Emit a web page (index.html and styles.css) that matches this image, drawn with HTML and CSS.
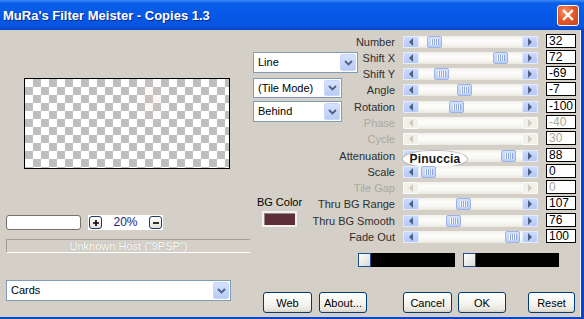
FILE: index.html
```html
<!DOCTYPE html>
<html>
<head>
<meta charset="utf-8">
<link rel="stylesheet" href="styles.css">
</head>
<body>
<div class="window">
  <div class="titlebar">
    <span class="title">MuRa's Filter Meister - Copies 1.3</span>
    <span class="close"><svg width="12" height="12" viewBox="0 0 12 12"><path d="M2 2 L10 10 M10 2 L2 10" stroke="#fff" stroke-width="2.4" stroke-linecap="square"/></svg></span>
  </div>
  <div class="client">
    <div class="left">
      <div class="preview"></div>
      <div class="zoomrow">
        <div class="zoombox"></div>
        <div class="zoomctl">
          <span class="zbtn"><svg width="8" height="8" viewBox="0 0 8 8"><path d="M4 1 V7 M1 4 H7" stroke="#000" stroke-width="1.6"/></svg></span>
          <span class="zpct">20%</span>
          <span class="zbtn"><svg width="8" height="8" viewBox="0 0 8 8"><path d="M1 4 H7" stroke="#000" stroke-width="1.6"/></svg></span>
        </div>
      </div>
      <div class="status">Unknown Host ("9PSP")</div>
      <div class="combo cards"><span class="combo-text">Cards</span><span class="combo-btn"><svg width="9" height="6" viewBox="0 0 9 6"><path d="M1 1 L4.5 4.5 L8 1" fill="none" stroke="#4d6185" stroke-width="1.8"/></svg></span></div>
    </div>
    <div class="main">
      <div class="toprow">
        <div class="mid">
          <div class="combo c-line"><span class="combo-text">Line</span><span class="combo-btn"><svg width="9" height="6" viewBox="0 0 9 6"><path d="M1 1 L4.5 4.5 L8 1" fill="none" stroke="#4d6185" stroke-width="1.8"/></svg></span></div>
          <div class="combo c-tile"><span class="combo-text">(Tile Mode)</span><span class="combo-btn"><svg width="9" height="6" viewBox="0 0 9 6"><path d="M1 1 L4.5 4.5 L8 1" fill="none" stroke="#4d6185" stroke-width="1.8"/></svg></span></div>
          <div class="combo c-behind"><span class="combo-text">Behind</span><span class="combo-btn"><svg width="9" height="6" viewBox="0 0 9 6"><path d="M1 1 L4.5 4.5 L8 1" fill="none" stroke="#4d6185" stroke-width="1.8"/></svg></span></div>
          <div class="bgcolor">
            <span class="bglabel">BG Color</span>
            <span class="swatch"></span>
          </div>
        </div>
        <div class="right">
          <div class="controls">
            <div class="row"><span class="lbl">Number</span>
            <span class="sb"><span class="arrow l"></span><span class="track"><span class="thumb" style="margin-left:8px"></span></span><span class="arrow r"></span></span>
            <span class="val">32</span></div>

            <div class="row"><span class="lbl">Shift X</span>
            <span class="sb"><span class="arrow l"></span><span class="track"><span class="thumb" style="margin-left:74px"></span></span><span class="arrow r"></span></span>
            <span class="val">72</span></div>

            <div class="row"><span class="lbl">Shift Y</span>
            <span class="sb"><span class="arrow l"></span><span class="track"><span class="thumb" style="margin-left:15px"></span></span><span class="arrow r"></span></span>
            <span class="val">-69</span></div>

            <div class="row tall"><span class="lbl">Angle</span>
            <span class="sb"><span class="arrow l"></span><span class="track"><span class="thumb" style="margin-left:38px"></span></span><span class="arrow r"></span></span>
            <span class="val">-7</span></div>

            <div class="row"><span class="lbl">Rotation</span>
            <span class="sb"><span class="arrow l"></span><span class="track"><span class="thumb" style="margin-left:30px"></span></span><span class="arrow r"></span></span>
            <span class="val">-100</span></div>

            <div class="row dis"><span class="lbl">Phase</span>
            <span class="sb"><span class="arrow l"></span><span class="track"></span><span class="arrow r"></span></span>
            <span class="val">-40</span></div>

            <div class="row tall dis"><span class="lbl">Cycle</span>
            <span class="sb"><span class="arrow l"></span><span class="track"></span><span class="arrow r"></span></span>
            <span class="val">30</span></div>

            <div class="row"><span class="lbl">Attenuation</span>
            <span class="sb"><span class="arrow l"></span><span class="track"><span class="thumb" style="margin-left:82px"></span></span><span class="arrow r"></span><span class="badge">Pinuccia</span></span>
            <span class="val">88</span></div>

            <div class="row"><span class="lbl">Scale</span>
            <span class="sb"><span class="arrow l"></span><span class="track"><span class="thumb" style="margin-left:2px"></span></span><span class="arrow r"></span></span>
            <span class="val">0</span></div>

            <div class="row dis"><span class="lbl">Tile Gap</span>
            <span class="sb"><span class="arrow l"></span><span class="track"></span><span class="arrow r"></span></span>
            <span class="val">0</span></div>

            <div class="row tall"><span class="lbl">Thru BG Range</span>
            <span class="sb"><span class="arrow l"></span><span class="track"><span class="thumb" style="margin-left:37px"></span></span><span class="arrow r"></span></span>
            <span class="val">107</span></div>

            <div class="row"><span class="lbl">Thru BG Smooth</span>
            <span class="sb"><span class="arrow l"></span><span class="track"><span class="thumb" style="margin-left:27px"></span></span><span class="arrow r"></span></span>
            <span class="val">76</span></div>

            <div class="row"><span class="lbl">Fade Out</span>
            <span class="sb"><span class="arrow l"></span><span class="track"><span class="thumb" style="margin-left:86px"></span></span><span class="arrow r"></span></span>
            <span class="val">100</span></div>
          </div>
          <div class="bars">
            <div class="cbar b1"><span class="knob"></span></div>
            <div class="cbar b2"><span class="knob"></span></div>
          </div>
        </div>
      </div>
      <div class="buttons">
        <span class="btn b-web">Web</span>
        <span class="btn b-about">About...</span>
        <span class="btn b-cancel">Cancel</span>
        <span class="btn b-ok">OK</span>
        <span class="btn b-reset">Reset</span>
      </div>
    </div>
  </div>
</div>
</body>
</html>
```
FILE: styles.css
```css
body {
  margin: 0;
  width: 584px;
  height: 319px;
  overflow: hidden;
  background: #0b45cf;
  font-family: "Liberation Sans", Arial, sans-serif;
  font-size: 11px;
  font-weight: normal;
  color: #000;
}
.window {
  display: flex;
  flex-direction: column;
  height: 319px;
}
.titlebar {
  height: 30px;
  flex: none;
  display: flex;
  align-items: center;
  justify-content: space-between;
  padding: 0 5px 0 3px;
  background: linear-gradient(#3d8cf8 0, #0a5fe9 3px, #0558e7 50%, #0755e0 88%, #0446c6 100%);
}
.title {
  color: #fff;
  font-weight: bold;
  font-size: 13px;
  text-shadow: 1px 1px 0 #0b2a8c;
}
.close {
  width: 22px;
  height: 21px;
  box-sizing: border-box;
  border: 1px solid #fff;
  border-radius: 3px;
  background: radial-gradient(circle at 35% 30%, #f3936c 0, #e25a2c 45%, #c9411a 100%);
  display: flex;
  align-items: center;
  justify-content: center;
}
.client {
  height: 287px;
  width: 580px;
  flex: none;
  background: #d4d0c8;
  display: flex;
  box-shadow: 1px 0 0 #f4f4f4;
}
.left {
  width: 250px;
  flex: none;
  box-sizing: border-box;
  padding-left: 6px;
  display: flex;
  flex-direction: column;
}
.preview {
  margin: 48px 0 0 18px;
  width: 206px;
  height: 91px;
  box-sizing: border-box;
  border: 1px solid #000;
  background:
    radial-gradient(ellipse 18px 26px at 128px 22px, rgba(236, 205, 205, 0.25), rgba(236, 205, 205, 0) 100%),
    conic-gradient(#bfbfbf 0 25%, #fff 0 50%, #bfbfbf 0 75%, #fff 0) 0 0 / 16px 16px;
}
.zoomrow {
  margin-top: 46px;
  height: 15px;
  display: flex;
  gap: 7px;
}
.zoombox {
  width: 75px;
  box-sizing: border-box;
  border: 1px solid #75726c;
  border-radius: 3px;
  background: #fff;
}
.zoomctl {
  width: 75px;
  box-sizing: border-box;
  padding: 0 1px;
  background: #fff;
  display: flex;
  align-items: center;
  justify-content: space-between;
}
.zbtn {
  width: 13px;
  height: 13px;
  box-sizing: border-box;
  border: 1px solid #1d3a63;
  border-radius: 3px;
  background: linear-gradient(#ffffff, #e4e2da);
  display: flex;
  align-items: center;
  justify-content: center;
}
.zpct {
  color: #1b1b78;
  font-size: 12px;
  line-height: 15px;
}
.status {
  margin-top: 9px;
  height: 14px;
  box-sizing: border-box;
  border-top: 1px solid #a29e96;
  border-left: 1px solid #a29e96;
  border-bottom: 1px solid #fff;
  color: #ffffff;
  text-align: center;
  line-height: 12px;
  font-size: 11px;
  text-shadow: 0 0 1px #a19d94;
}
.combo {
  display: flex;
  box-sizing: border-box;
  border: 1px solid #7f9db9;
  background: #fff;
  height: 21px;
}
.combo-text {
  flex: 1;
  padding-left: 4px;
  line-height: 19px;
  font-size: 11px;
}
.combo-btn {
  width: 16px;
  margin: 1px;
  box-sizing: border-box;
  border: 1px solid #c7d7fb;
  border-radius: 2px;
  background: linear-gradient(#d6e2fd, #b8cbf7);
  display: flex;
  align-items: center;
  justify-content: center;
}
.cards {
  margin-top: 27px;
  width: 225px;
}
.main {
  flex: 1;
  display: flex;
  flex-direction: column;
}
.toprow {
  height: 237px;
  display: flex;
}
.mid {
  width: 105px;
  margin-left: 3px;
  flex: none;
  display: flex;
  flex-direction: column;
}
.c-line {
  margin-top: 22px;
  width: 105px;
}
.c-tile {
  margin-top: 5px;
  width: 89px;
  height: 20px;
}
.c-tile .combo-text {
  line-height: 18px;
}
.c-behind {
  margin-top: 3px;
  width: 89px;
}
.bgcolor {
  margin: 74px 0 0 6px;
  width: 41px;
  display: flex;
  flex-direction: column;
  align-items: center;
}
.bglabel {
  white-space: nowrap;
  line-height: 13px;
}
.swatch {
  margin-top: 2px;
  width: 35px;
  height: 16px;
  box-sizing: border-box;
  border: 2px solid #f3f1ec;
  box-shadow: inset 1px 1px 0 #8e8a83;
  background: #5e2f38;
}
.right {
  flex: 1;
  display: flex;
  flex-direction: column;
}
.controls {
  margin-top: 4px;
  display: flex;
  flex-direction: column;
}
.row {
  height: 16px;
  display: flex;
}
.row.tall {
  height: 17px;
}
.lbl {
  width: 37px;
  flex: none;
  margin-right: 8px;
  display: flex;
  justify-content: flex-end;
  white-space: nowrap;
  line-height: 16px;
  color: #2e2e2e;
}
.row.dis .lbl,
.row.dis .val {
  color: #aca899;
}
.sb {
  position: relative;
  width: 135px;
  height: 12px;
  margin-top: 2px;
  flex: none;
  display: flex;
  background: linear-gradient(#f1f0ea, #fdfdfb 35%, #f8f7f3 70%, #e9e7de);
}
.arrow {
  width: 16px;
  flex: none;
  box-sizing: border-box;
  border: 1px solid #e3ebfd;
  border-radius: 2px;
  background: linear-gradient(#cbdafc, #b6c9f6);
  display: flex;
  align-items: center;
  justify-content: center;
}
.arrow.l::before {
  content: "";
  border-top: 4px solid transparent;
  border-bottom: 4px solid transparent;
  border-right: 4px solid #4d6185;
}
.arrow.r::before {
  content: "";
  border-top: 4px solid transparent;
  border-bottom: 4px solid transparent;
  border-left: 4px solid #4d6185;
}
.row.dis .arrow {
  background: #f1f0e9;
  border-color: #fbfbf9;
}
.row.dis .arrow.l::before {
  border-right-color: #cdcbbf;
}
.row.dis .arrow.r::before {
  border-left-color: #cdcbbf;
}
.track {
  flex: 1;
  display: flex;
}
.thumb {
  width: 15px;
  flex: none;
  box-sizing: border-box;
  border: 1px solid #9db3e6;
  border-radius: 2px;
  background:
    repeating-linear-gradient(90deg, #f2f6fe 0 1px, #8fa8df 1px 2px) center / 8px 6px no-repeat,
    linear-gradient(#d4e0fc, #bccef8);
}
.badge {
  position: absolute;
  left: 0;
  top: 1px;
  width: 64px;
  height: 16px;
  border-radius: 50%;
  background: radial-gradient(ellipse at center, #ffffff 65%, #ececec 100%);
  box-shadow: 0 0 1px 1px #b0b0b0;
  display: flex;
  align-items: center;
  justify-content: center;
  font-weight: bold;
  font-size: 12px;
  color: #151515;
  letter-spacing: 0.2px;
}
.val {
  margin-left: 8px;
  width: 30px;
  height: 14px;
  flex: none;
  box-sizing: border-box;
  border: 1px solid #000;
  background: #fff;
  font-size: 12px;
  line-height: 12px;
  padding-left: 2px;
}
.bars {
  margin-top: 8px;
  display: flex;
  gap: 8px;
}
.cbar {
  height: 14px;
  background: #000;
  display: flex;
}
.b1 {
  width: 97px;
}
.b2 {
  width: 96px;
}
.knob {
  width: 13px;
  box-sizing: border-box;
  border: 1px solid #1e4d8c;
  background: linear-gradient(135deg, #ffffff, #d9d9d6);
}
.buttons {
  margin-top: 25px;
  padding-left: 13px;
  display: flex;
}
.btn {
  height: 21px;
  box-sizing: border-box;
  border: 1px solid #003c74;
  border-radius: 3px;
  background: linear-gradient(#ffffff, #f5f4f0 55%, #e8e6de 85%, #d8d3c8);
  display: flex;
  align-items: center;
  justify-content: center;
  font-size: 11px;
}
.b-web { width: 49px; }
.b-about { width: 48px; margin-left: 7px; }
.b-cancel { width: 49px; margin-left: 36px; }
.b-ok { width: 48px; margin-left: 6px; }
.b-reset { width: 47px; margin-left: 22px; }
```
